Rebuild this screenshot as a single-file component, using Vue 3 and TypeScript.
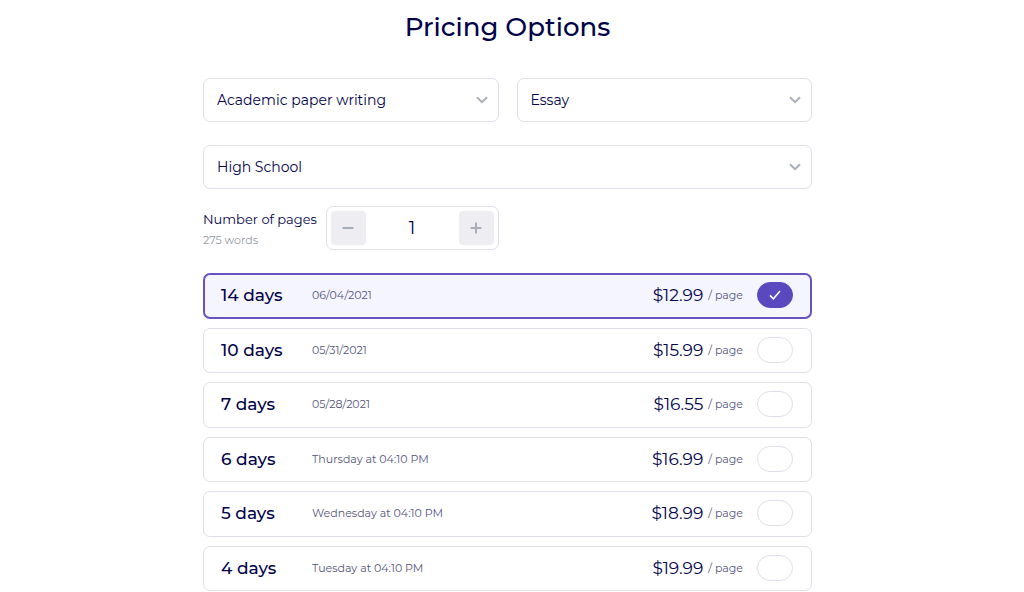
<script setup lang="ts">
import { ref } from 'vue'

interface Deadline {
  days: number
  due: string
  price: string
}

const paperService = ref('Academic paper writing')
const paperType = ref('Essay')
const level = ref('High School')
const pages = ref(1)
const selectedDays = ref(14)

const services = ['Academic paper writing', 'Editing', 'Proofreading']
const paperTypes = ['Essay', 'Research paper', 'Case study']
const levels = ['High School', 'College', 'University']

const deadlines: Deadline[] = [
  { days: 14, due: '06/04/2021', price: '$12.99' },
  { days: 10, due: '05/31/2021', price: '$15.99' },
  { days: 7, due: '05/28/2021', price: '$16.55' },
  { days: 6, due: 'Thursday at 04:10 PM', price: '$16.99' },
  { days: 5, due: 'Wednesday at 04:10 PM', price: '$18.99' },
  { days: 4, due: 'Tuesday at 04:10 PM', price: '$19.99' },
]

function changePages(step: number) {
  pages.value = Math.max(1, Number(pages.value) + step)
}
</script>

<template>
  <main class="pricing">
    <h1 class="title">Pricing Options</h1>
    <form class="form" @submit.prevent>
      <div class="columns">
        <div class="picker">
          <select v-model="paperService" aria-label="Service">
            <option v-for="item in services" :key="item">{{ item }}</option>
          </select>
          <svg class="chevron" viewBox="0 0 12 8" aria-hidden="true"><path d="M1 1.2 6 6.2l5-5" /></svg>
        </div>
        <div class="picker">
          <select v-model="paperType" aria-label="Type of paper">
            <option v-for="item in paperTypes" :key="item">{{ item }}</option>
          </select>
          <svg class="chevron" viewBox="0 0 12 8" aria-hidden="true"><path d="M1 1.2 6 6.2l5-5" /></svg>
        </div>
      </div>
      <div class="picker level">
        <select v-model="level" aria-label="Academic level">
          <option v-for="item in levels" :key="item">{{ item }}</option>
        </select>
        <svg class="chevron" viewBox="0 0 12 8" aria-hidden="true"><path d="M1 1.2 6 6.2l5-5" /></svg>
      </div>
      <div class="columns pages">
        <div class="amount">
          <div class="caption">
            <label for="pages">Number of pages</label>
            <span class="words">{{ pages * 275 }} words</span>
          </div>
          <div class="stepper">
            <button type="button" aria-label="Fewer pages" @click="changePages(-1)">
              <svg viewBox="0 0 12 12" aria-hidden="true"><path d="M0.5 6h11" /></svg>
            </button>
            <input id="pages" v-model="pages" type="text" inputmode="numeric" />
            <button type="button" aria-label="More pages" @click="changePages(1)">
              <svg viewBox="0 0 12 12" aria-hidden="true"><path d="M0.5 6h11M6 0.5v11" /></svg>
            </button>
          </div>
        </div>
      </div>
      <div class="deadlines" role="radiogroup" aria-label="Deadline">
        <label
          v-for="item in deadlines"
          :key="item.days"
          class="deadline"
          :class="{ selected: item.days === selectedDays }"
        >
          <span class="days">{{ item.days }} days</span>
          <span class="due">{{ item.due }}</span>
          <span class="price">{{ item.price }}</span>
          <span class="unit">/ page</span>
          <span class="toggle">
            <input v-model="selectedDays" type="radio" name="deadline" :value="item.days" />
            <svg v-if="item.days === selectedDays" viewBox="0 0 12 10" aria-hidden="true">
              <path d="M1 5.4 4.4 8.8 11 1" />
            </svg>
          </span>
        </label>
      </div>
    </form>
  </main>
</template>

<style>
body {
  background: #fff;
}
</style>

<style scoped>
.pricing {
  box-sizing: border-box;
  max-width: 640px;
  margin: 0 auto;
  padding: 9px 20px 0 11px;
  color: #02024a;
  font-family: Montserrat, Inter, "Open Sans", sans-serif;
}

.title {
  margin: 0;
  font-size: 26px;
  line-height: 36px;
  font-weight: 550;
  text-align: center;
}

.form {
  margin-top: 33px;
}

.columns {
  display: grid;
  grid-template-columns: 1fr 1fr;
  gap: 18px;
}

.picker {
  display: grid;
  align-items: center;
}

.picker > * {
  grid-area: 1 / 1;
}

.level {
  margin-top: 23px;
}

select {
  appearance: none;
  box-sizing: border-box;
  width: 100%;
  height: 44px;
  padding: 0 36px 0 13px;
  border: 1px solid #dfdfe9;
  border-radius: 7px;
  background: #fff;
  color: #02024a;
  font: 400 14px/20px Montserrat, Inter, "Open Sans", sans-serif;
}

.chevron {
  justify-self: end;
  width: 12px;
  height: 8px;
  margin-right: 11px;
  fill: none;
  stroke: #a9afb8;
  stroke-width: 2;
  pointer-events: none;
}

.pages {
  margin-top: 17px;
}

.amount {
  display: flex;
  justify-content: space-between;
  align-items: center;
}

.caption {
  display: flex;
  flex-direction: column;
  gap: 1px;
  padding-top: 3px;
  font-size: 13px;
  line-height: 20px;
  white-space: nowrap;
}

.words {
  color: #94989f;
  font-size: 11px;
}

.stepper {
  box-sizing: border-box;
  display: flex;
  width: 173px;
  height: 44px;
  padding: 4px;
  border: 1px solid #dfdfe9;
  border-radius: 7px;
}

.stepper button {
  display: grid;
  place-items: center;
  flex: none;
  width: 35px;
  padding: 0;
  border: 0;
  border-radius: 4px;
  background: #eeeef2;
}

.stepper svg {
  width: 12px;
  height: 12px;
  fill: none;
  stroke: #a9afb8;
  stroke-width: 2;
}

.stepper input {
  flex: 1;
  min-width: 0;
  padding: 0;
  border: 0;
  background: transparent;
  color: inherit;
  font: 400 18px/24px Montserrat, Inter, "Open Sans", sans-serif;
  text-align: center;
}

.deadlines {
  display: grid;
  grid-auto-rows: 1fr;
  gap: 9px;
  min-height: 318px;
  margin-top: 23px;
}

.deadline {
  box-sizing: border-box;
  display: flex;
  align-items: center;
  padding: 0 18px 1px 17px;
  border: 1px solid #dfdfe9;
  border-radius: 7px;
}

.selected {
  padding: 0 17px 1px 16px;
  border: 2px solid #6652c5;
  background: #f5f5ff;
}

.days {
  width: 91px;
  font-size: 17px;
  line-height: 24px;
  font-weight: 550;
}

.due {
  flex: 1;
  color: #55557c;
  font-size: 11px;
  line-height: 20px;
}

.price {
  font-size: 17px;
  line-height: 24px;
  font-weight: 400;
}

.unit {
  margin: 0 14px 0 5px;
  color: #55557c;
  font-size: 11px;
  line-height: 20px;
}

.toggle {
  display: grid;
  place-items: center;
}

.toggle > * {
  grid-area: 1 / 1;
}

.toggle input {
  appearance: none;
  box-sizing: border-box;
  width: 36px;
  height: 26px;
  margin: 0;
  border: 1px solid #dfdfe9;
  border-radius: 13px;
}

.toggle input:checked {
  border-color: #5a48bf;
  background: #5a48bf;
}

.toggle svg {
  width: 12px;
  height: 10px;
  fill: none;
  stroke: #fff;
  stroke-width: 1.5;
  pointer-events: none;
}
</style>
